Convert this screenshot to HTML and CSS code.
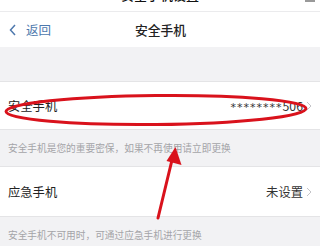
FILE: index.html
```html
<!DOCTYPE html>
<html lang="zh">
<head>
<meta charset="utf-8">
<link rel="stylesheet" href="styles.css">
</head>
<body>
<div class="page">
  <div class="status"><span class="status-text">安全手机设置</span><span class="status-mark"></span></div>
  <div class="nav">
    <div class="back">
      <svg class="back-icon" width="8" height="12" viewBox="0 0 8 12"><polyline points="6,1 1.5,6 6,11" fill="none" stroke="#4d78ad" stroke-width="1.5"/></svg>
      <span>返回</span>
    </div>
    <div class="title">安全手机</div>
    <div class="nav-spacer"></div>
  </div>
  <div class="gap"></div>
  <div class="row row-first">
    <span class="label">安全手机</span>
    <span class="value"><span class="stars">********</span>506<svg class="chev" width="6" height="10" viewBox="0 0 6 10"><polyline points="1,1 5,5 1,9" fill="none" stroke="#c4c4c8" stroke-width="1"/></svg></span>
  </div>
  <div class="note note-first">安全手机是您的重要密保，如果不再使用请立即更换</div>
  <div class="row row-second">
    <span class="label">应急手机</span>
    <span class="value">未设置<svg class="chev" width="6" height="10" viewBox="0 0 6 10"><polyline points="1,1 5,5 1,9" fill="none" stroke="#c4c4c8" stroke-width="1"/></svg></span>
  </div>
  <div class="note">安全手机不可用时，可通过应急手机进行更换</div>
  <svg class="marks" width="320" height="246" viewBox="0 0 320 246">
    <ellipse cx="156" cy="110" rx="150" ry="14.5" transform="rotate(-0.6 156 110)" fill="none" stroke="#d9121c" stroke-width="3"/>
    <line x1="158" y1="218" x2="172" y2="160" stroke="#d9121c" stroke-width="3" stroke-linecap="round"/>
    <polygon points="175.5,147 181.5,165 166.5,161" fill="#d9121c"/>
  </svg>
</div>
</body>
</html>
```
FILE: styles.css
```css
* { box-sizing: border-box; }
html, body { margin: 0; padding: 0; }
body {
  width: 320px;
  height: 246px;
  overflow: hidden;
  background: #f2f2f4;
  font-family: "Noto Sans CJK SC", "Noto Sans", sans-serif;
  color: #222;
}
.page { position: relative; width: 320px; height: 246px; }
.status {
  height: 12px;
  background: #fff;
  border-bottom: 1px solid #ebebed;
  overflow: hidden;
  display: flex;
  justify-content: center;
  align-items: flex-start;
  position: relative;
}
.status-text {
  font-size: 13px;
  line-height: 13px;
  margin-top: -12px;
  color: #111;
  font-weight: 500;
}
.status-mark {
  position: absolute;
  right: 5px;
  top: 0;
  width: 10px;
  height: 2px;
  background: #999;
}
.nav {
  height: 35px;
  background: #fff;
  display: flex;
  align-items: center;
  padding: 0 8px 0 9px;
}
.back {
  flex: 1;
  display: flex;
  align-items: center;
  gap: 9px;
  color: #4d78ad;
  font-size: 12.5px;
}
.back-icon { display: block; }
.title {
  font-size: 12.8px;
  color: #222;
  font-weight: 500;
}
.nav-spacer { flex: 1; }
.gap { height: 34px; }
.row {
  background: #fff;
  display: flex;
  align-items: center;
  justify-content: space-between;
  padding: 0 8px 0 8px;
  border-top: 1px solid #e4e4e6;
  border-bottom: 1px solid #e4e4e6;
  font-size: 12.3px;
}
.row-first { height: 49px; }
.row-second { height: 51px; }
.label { color: #222; }
.value {
  color: #333;
  display: flex;
  align-items: center;
  gap: 3px;
}
.stars {
  font-family: "DejaVu Sans", sans-serif;
  font-size: 11px;
  letter-spacing: 1px;
  position: relative;
  top: 2px;
  margin-right: -3px;
}
.chev { display: block; }
.note {
  font-size: 9.7px;
  color: #a4a4a8;
  padding: 0 8px;
  height: 36px;
  display: flex;
  align-items: center;
}
.note-first { height: 36px; }
.marks {
  position: absolute;
  left: 0;
  top: 0;
  pointer-events: none;
}
```
